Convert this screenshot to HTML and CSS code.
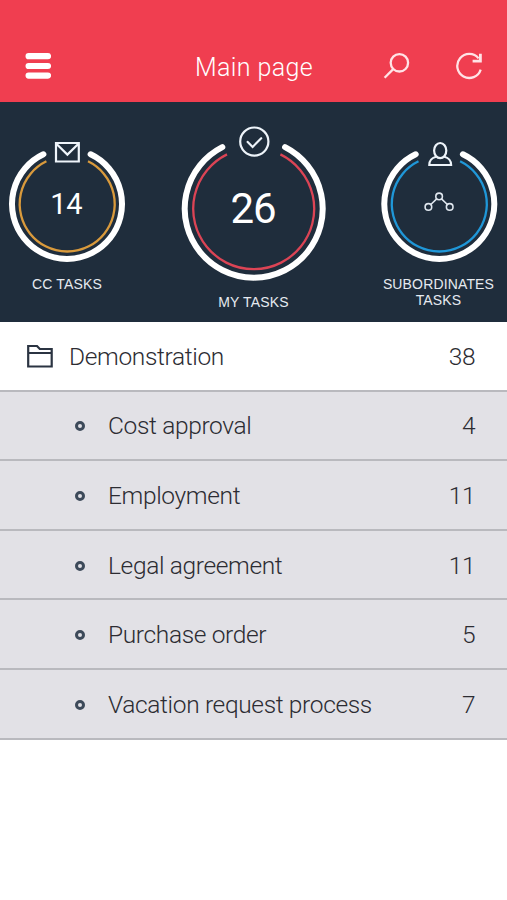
FILE: index.html
```html
<!DOCTYPE html>
<html lang="en">
<head>
<meta charset="UTF-8">
<meta name="viewport" content="width=device-width, initial-scale=1.0">
<title>Main page</title>
<link rel="stylesheet" href="styles.css">
</head>
<body>
  <header class="header">
    <svg class="menu-icon" width="26" height="26" viewBox="0 0 26 26">
      <path d="M3.6 3.2h19.4M3.6 13h19.4M3.6 22.6h19.4"/>
    </svg>
    <h1>Main page</h1>
    <svg class="header-icon search-icon" width="28" height="28" viewBox="0 0 28 28">
      <circle cx="16.4" cy="10.8" r="8.7"/>
      <path d="M10.2 17.1L1.6 25.8"/>
    </svg>
    <svg class="header-icon" width="28" height="28" viewBox="0 0 28 28">
      <path d="M24.7 17.6A12 12 0 1 1 22.6 6.4"/>
      <path class="arrow" d="M24.4 1.8v7.4h-7.8"/>
    </svg>
  </header>

  <section class="gauges">
    <div class="gauge">
      <svg width="134" height="164" viewBox="0 0 134 164">
        <path class="ring" d="M43.4 52.3A55 55 0 1 0 90.6 52.3"/>
        <path class="progress orange" d="M46.4 59.3A47.5 47.5 0 1 0 88 59.3"/>
        <path class="icon" d="M56 41h22.8v18.5H56zM56.6 42L67.4 52.6 78.2 42"/>
        <text class="count" x="66.3" y="111.7">14</text>
      </svg>
      <p>CC TASKS</p>
    </div>
    <div class="gauge gauge-main">
      <svg width="239" height="184" viewBox="0 0 239 184">
        <path class="ring" d="M88.3 45.2A69 69 0 1 0 151.1 45.2"/>
        <path class="progress red" d="M93 52.4A60.5 60.5 0 1 0 146.4 52.4"/>
        <circle class="icon" cx="120.3" cy="39.6" r="14.1"/>
        <path class="icon" d="M113.7 39.9l4.9 5 8.6-8.7"/>
        <text class="count count-main" x="119" y="120.5">26</text>
      </svg>
      <p>MY TASKS</p>
    </div>
    <div class="gauge">
      <svg width="134" height="164" viewBox="0 0 134 164">
        <path class="ring" d="M42.7 52.3A55 55 0 1 0 89.9 52.3"/>
        <path class="progress blue" d="M45.5 59.3A47.5 47.5 0 1 0 87.1 59.3"/>
        <ellipse class="icon" cx="67.2" cy="48.6" rx="6.1" ry="7.6"/>
        <path class="icon" d="M63 54.8c-4.500 1.300-6.700 3-6.700 8.200h21.800c0-5.200-2.200-6.900-6.700-8.200"/>
        <g class="nodes">
          <circle cx="66.1" cy="94.4" r="3.3"/>
          <circle cx="55.4" cy="104.9" r="3.3"/>
          <circle cx="76.7" cy="104.9" r="3.3"/>
          <path d="M63.7 96.8l-5.9 5.7M68.5 96.8l5.9 5.7"/>
        </g>
      </svg>
      <p>SUBORDINATES<br>TASKS</p>
    </div>
  </section>

  <ul class="list">
    <li class="group">
      <svg class="folder" width="26" height="24" viewBox="0 0 26 24">
        <path d="M1.2 22.500V2h8.800l2.800 3H24.700V22.500zM1.200 9H24.700"/>
      </svg>
      <span class="name">Demonstration</span>
      <span class="num">38</span>
    </li>
    <li><i class="dot"></i><span class="name">Cost approval</span><span class="num">4</span></li>
    <li><i class="dot"></i><span class="name">Employment</span><span class="num">11</span></li>
    <li><i class="dot"></i><span class="name">Legal agreement</span><span class="num">11</span></li>
    <li><i class="dot"></i><span class="name">Purchase order</span><span class="num">5</span></li>
    <li><i class="dot"></i><span class="name">Vacation request process</span><span class="num">7</span></li>
  </ul>
</body>
</html>
```
FILE: styles.css
```css
* {
  box-sizing: border-box;
}

body {
  margin: 0;
  background: #fff;
  font-family: Roboto, "Liberation Sans", sans-serif;
  font-weight: 300;
}

svg {
  display: block;
  fill: none;
  stroke-linecap: round;
}

/* header */
.header {
  display: flex;
  align-items: center;
  height: 102px;
  padding: 30px 23px 0 25px;
  background: #f03e50;
  color: #fff;
}

.menu-icon {
  stroke: #fff;
  stroke-width: 6.2;
}

.header h1 {
  flex: 1;
  margin: 4px 0 0 144px;
  font-size: 25px;
  line-height: 30px;
  font-weight: 300;
  letter-spacing: 0.4px;
}

.header-icon {
  stroke: #ffe3e6;
  stroke-width: 2.3;
  stroke-linecap: butt;
}

.header-icon .arrow {
  stroke-width: 2.8;
}

.search-icon {
  margin-right: 45px;
}

/* task counters */
.gauges {
  display: grid;
  grid-template-columns: 134px 1fr 134px;
  height: 220px;
  background: #1f2d3c;
}

.gauge p {
  margin: 10px 0 0;
  color: #e6eaf0;
  font: 14px/16.5px "Liberation Sans", Arial, sans-serif;
  letter-spacing: 0.15px;
  text-align: center;
}

.gauge:last-child p {
  margin: 9.5px 3px 0 0;
  white-space: nowrap;
}

.gauge-main p {
  margin-top: 8px;
}

.ring {
  stroke: #fff;
  stroke-width: 6;
}

.progress {
  stroke-width: 2.3;
  stroke-linecap: butt;
}

.orange {
  stroke: #d99a3c;
}

.red {
  stroke: #dc4455;
}

.blue {
  stroke: #1f97d8;
}

.icon {
  stroke: #eef4fa;
  stroke-width: 2.2;
}

.nodes {
  stroke: #dfe6ee;
  stroke-width: 1.6;
}

.count {
  fill: #fff;
  font-size: 29px;
  font-weight: 400;
  letter-spacing: -0.3px;
  text-anchor: middle;
}

.count-main {
  font-size: 42px;
  letter-spacing: -1px;
}

/* process list */
.list {
  margin: 0;
  padding: 0;
  list-style: none;
}

.list li {
  display: flex;
  align-items: center;
  height: 69.6px;
  padding: 1px 32px 0 75px;
  border-bottom: 2px solid #b9b9be;
  background: #e2e1e6;
  color: #2c2c32;
  font-size: 24.5px;
}

.list .group {
  padding-left: 27px;
  background: #fff;
}

.folder {
  margin-right: 16px;
  stroke: #2b3442;
  stroke-width: 2.2;
}

.dot {
  width: 10px;
  height: 10px;
  margin: 1px 23px 0 0;
  border: 3px solid #3d4a5a;
  border-radius: 50%;
}

.name {
  flex: 1;
  letter-spacing: -0.35px;
}

.num {
  letter-spacing: -0.5px;
}
```
